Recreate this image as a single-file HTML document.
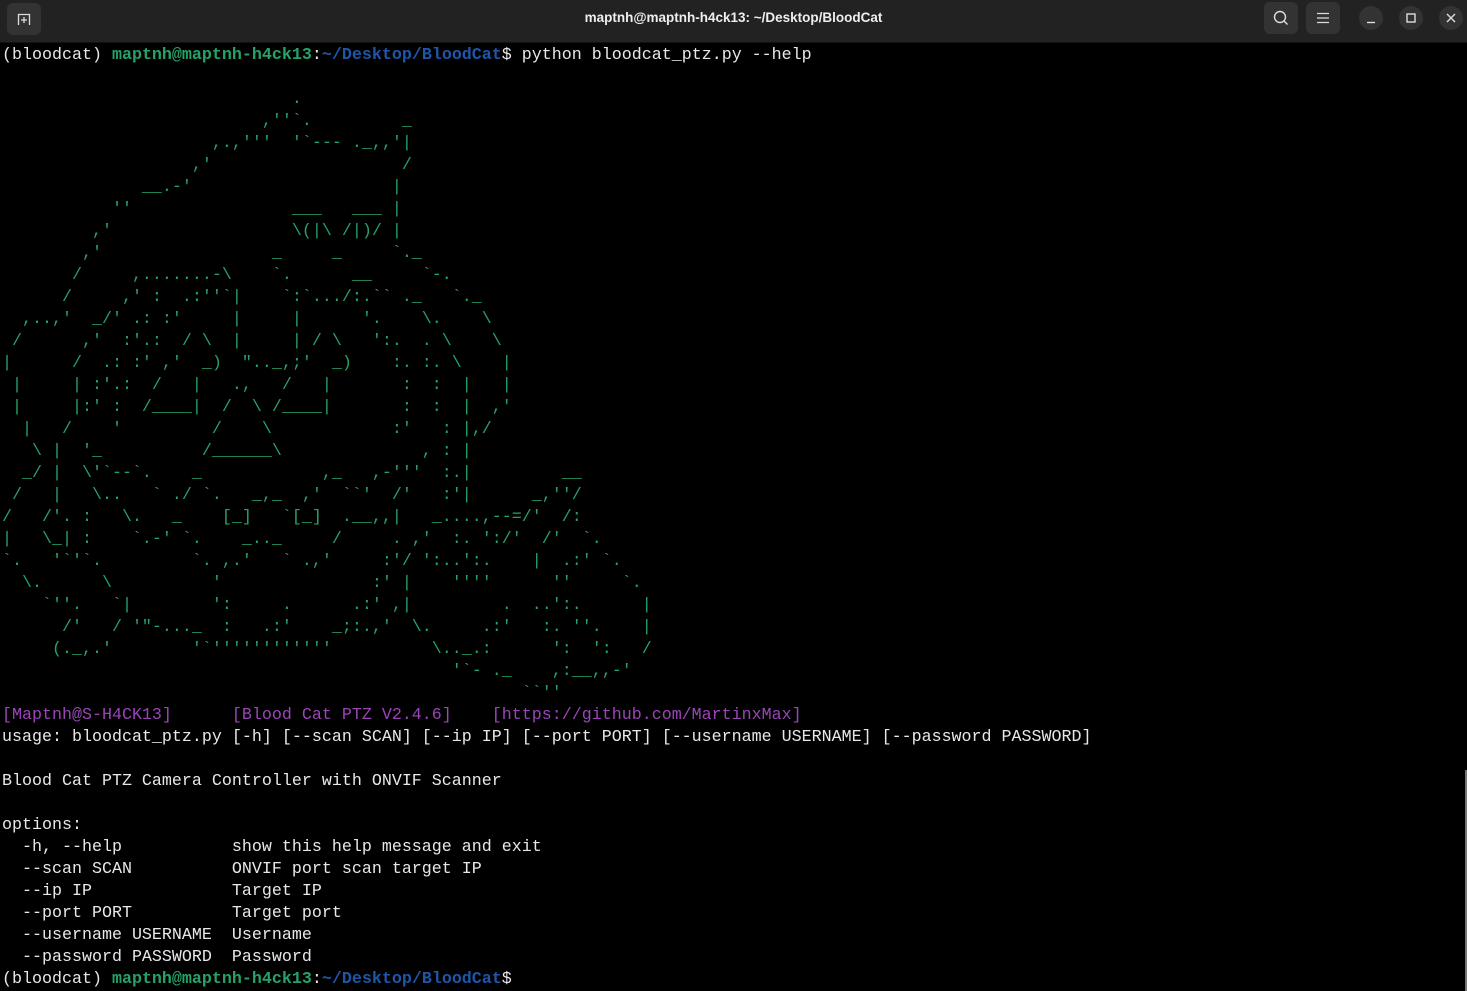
<!DOCTYPE html>
<html><head><meta charset="utf-8"><style>
html,body{margin:0;padding:0;background:#000;width:1467px;height:991px;overflow:hidden}
#tb{position:absolute;left:0;top:0;width:1467px;height:42px;background:#222222;border-bottom:1px solid #111}
#tt{position:absolute;left:0;width:1467px;top:10px;text-align:center;color:#eee;font:bold 13.5px "Liberation Sans","DejaVu Sans",sans-serif}
.btn{position:absolute;top:2px;width:34px;height:32px;background:#333;border-radius:6px}
.cb{position:absolute;top:6px;width:24px;height:24px;background:#333;border-radius:50%}
pre{position:absolute;left:2px;top:45px;margin:0;font-family:"Liberation Mono",monospace;font-size:16.667px;line-height:22px;color:#e8e8e8;white-space:pre}
.g{color:#26a269}.gb{color:#26a269;font-weight:bold}.b{color:#1f56a8;font-weight:bold}.p{color:#9b45b8}
#sb{position:absolute;right:0;top:770px;width:2px;height:221px;background:#777}
</style></head><body>
<div id="tb">
<div class="btn" style="left:7px;top:3px"><svg width="34" height="32"><path d="M11.5 22 V11.5 H22.5 V22" fill="none" stroke="#ddd" stroke-width="1.3"/><path d="M17 14 V20 M14 17 H20" stroke="#ddd" stroke-width="1.3"/></svg></div>
<div id="tt">maptnh@maptnh-h4ck13: ~/Desktop/BloodCat</div>
<div class="btn" style="left:1264px"><svg width="34" height="32"><circle cx="16" cy="15" r="5.5" fill="none" stroke="#ddd" stroke-width="1.4"/><path d="M20 19 L23.5 22.5" stroke="#ddd" stroke-width="1.4"/></svg></div>
<div class="btn" style="left:1306px"><svg width="34" height="32"><path d="M11 11.5H23M11 16H23M11 20.5H23" stroke="#ddd" stroke-width="1.3"/></svg></div>
<div class="cb" style="left:1359px"><svg width="24" height="24"><path d="M8 16.5H16" stroke="#ddd" stroke-width="1.4"/></svg></div>
<div class="cb" style="left:1399px"><svg width="24" height="24"><rect x="8" y="8" width="8" height="8" fill="none" stroke="#ddd" stroke-width="1.4"/></svg></div>
<div class="cb" style="left:1439px"><svg width="24" height="24"><path d="M8 8L16 16M16 8L8 16" stroke="#ddd" stroke-width="1.4"/></svg></div>
</div>
<pre>(bloodcat) <span class="gb">maptnh@maptnh-h4ck13</span>:<span class="b">~/Desktop/BloodCat</span>$ python bloodcat_ptz.py --help

<span class="g">                             .
                          ,''`.         _
                     ,.,'''  '`--- ._,,'|
                   ,'                   /
              __.-'                    |
           ''                ___   ___ |
         ,'                  \(|\ /|)/ |
        ,'                 _     _     `._
       /     ,.......-\    `.      __     `-.
      /     ,' :  .:''`|    `:`.../:.`` ._   `._
  ,..,'  _/' .: :'     |     |      '.    \.    \
 /      ,'  :'.:  / \  |     | / \   ':.  . \    \
|      /  .: :' ,'  _)  ".._,;'  _)    :. :. \    |
 |     | :'.:  /   |   .,   /   |       :  :  |   |
 |     |:' :  /____|  /  \ /____|       :  :  |  ,'
  |   /    '         /    \            :'   : |,/
   \ |  '_          /______\              , : |
  _/ |  \'`--`.    _            ,_   ,-'''  :.|         __
 /   |   \..   ` ./ `.   _,_  ,'  ``'  /'   :'|      _,''/
/   /'. :   \.   _    [_]   `[_]  .__,,|   _....,--=/'  /:
|   \_| :    `.-' `.    _.._     /     . ,'  :. ':/'  /'  `.
`.   '`'`.         `. ,.'   ` .,'     :'/ ':..':.    |  .:' `.
  \.      \          '               :' |    ''''      ''     `.
    `''.   `|        ':     .      .:' ,|         .  ..':.      |
      /'   / '"-..._  :   .:'    _;:.,'  \.     .:'   :. ''.    |
     (._,.'        '`''''''''''''          \.._.:      ':  ':   /
                                             '`- ._    ,:__,,-'
                                                    ``''</span>
<span class="p">[Maptnh@S-H4CK13]      [Blood Cat PTZ V2.4.6]    [https://github.com/MartinxMax]</span>
usage: bloodcat_ptz.py [-h] [--scan SCAN] [--ip IP] [--port PORT] [--username USERNAME] [--password PASSWORD]

Blood Cat PTZ Camera Controller with ONVIF Scanner

options:
  -h, --help           show this help message and exit
  --scan SCAN          ONVIF port scan target IP
  --ip IP              Target IP
  --port PORT          Target port
  --username USERNAME  Username
  --password PASSWORD  Password
(bloodcat) <span class="gb">maptnh@maptnh-h4ck13</span>:<span class="b">~/Desktop/BloodCat</span>$</pre>
<div id="sb"></div>
</body></html>
